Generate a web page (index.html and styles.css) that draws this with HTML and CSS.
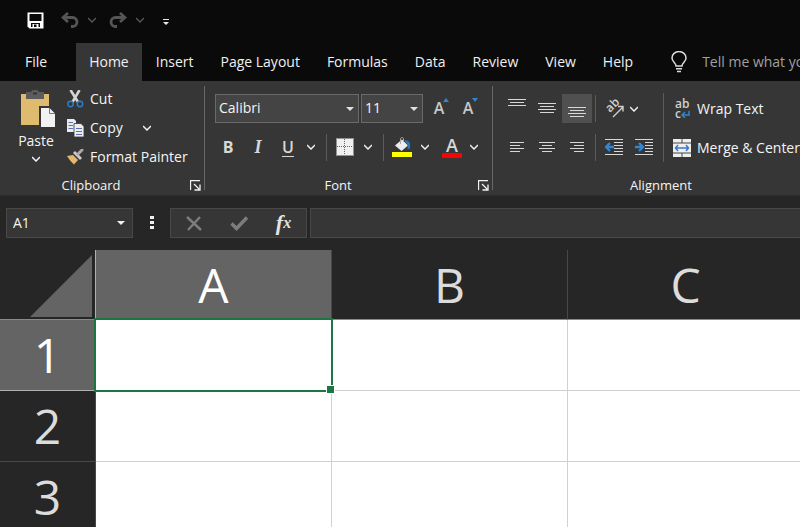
FILE: index.html
```
<!DOCTYPE html>
<html lang="en">
<head>
    <meta charset="UTF-8">
    <meta name="viewport" content="width=device-width, initial-scale=1.0">
    <title>Book1</title>
    <link rel="stylesheet" href="styles.css">
</head>
<body>

    <svg class="defs" aria-hidden="true">
        <symbol id="chevron" viewBox="0 0 8 6">
            <path d="M0 1l4 4 4-4" fill="none" stroke="currentColor" stroke-width="1.500"/>
        </symbol>
        <symbol id="launcher" viewBox="0 0 11 11">
            <path d="M.5 10V.5H10M4 4l5 5M10 4.500v5.500H4.500" fill="none" stroke="currentColor" stroke-width="1.300"/>
        </symbol>
    </svg>

    <header class="quick">
        <button class="q-save" aria-label="Save">
            <svg width="17" height="17" viewBox="0 0 17 17">
                <path d="M.5.5h16v16H2.500L.5 14.500z" fill="#fff"/>
                <path d="M2.500 2h12v7h-12zM4 11.500h9V15H4z" fill="#0a0a0a"/>
                <path d="M5.500 11.500h6V15H9.500v-2.500H7V15H5.500z" fill="#fff"/>
                <path d="M4 11h9v1H4z" fill="#0a0a0a"/>
            </svg>
        </button>
        <button class="q-undo" aria-label="Undo">
            <svg width="18" height="16" viewBox="0 0 18 16">
                <path d="M7 1L2 5.500 7 10M2 5.500h9.500a4.500 4.500 0 0 1 0 9H10" fill="none" stroke="currentColor" stroke-width="2.800"/>
            </svg>
        </button>
        <button class="q-drop" aria-label="Undo list"><svg width="8" height="6"><use href="#chevron"/></svg></button>
        <button class="q-undo q-redo" aria-label="Redo">
            <svg width="18" height="16" viewBox="0 0 18 16">
                <path d="M11 1l5 4.500L11 10M16 5.500H6.500a4.500 4.500 0 0 0 0 9H8" fill="none" stroke="currentColor" stroke-width="2.800"/>
            </svg>
        </button>
        <button class="q-drop" aria-label="Redo list"><svg width="8" height="6"><use href="#chevron"/></svg></button>
        <button class="q-more" aria-label="Customize">
            <svg width="6" height="7" viewBox="0 0 6 7"><path d="M0 0h6v1H0zM0 3h6L3 6z" fill="#e8e8e8"/></svg>
        </button>
    </header>

    <nav class="tabs">
        <a href="#" class="file">File</a>
        <a href="#" class="active">Home</a>
        <a href="#">Insert</a>
        <a href="#">Page Layout</a>
        <a href="#">Formulas</a>
        <a href="#">Data</a>
        <a href="#">Review</a>
        <a href="#">View</a>
        <a href="#">Help</a>
        <label class="tell" for="tell">
            <svg width="16" height="22" viewBox="0 0 16 22" fill="none" stroke="#dcdcdc" stroke-width="1.500">
                <path d="M5 15c0-3-4-4-4-8a7 6.500 0 0 1 14 0c0 4-4 5-4 8z"/>
                <path d="M5 17.800h6M6 20.500h4"/>
            </svg>
        </label>
        <input type="text" id="tell" placeholder="Tell me what you want to do">
    </nav>

    <main class="ribbon">
        <section class="group clipboard">
            <div class="tools">
                <button class="paste">
                    <svg width="35" height="38" viewBox="0 0 35 38">
                        <path d="M0 4h28v31H0z" fill="#dfbb70"/>
                        <path d="M5 2h5c1-3 7-3 8 0h5v7H5z" fill="#5c5c5c"/>
                        <path d="M12 2.500h4v2h-4z" fill="#363636"/>
                        <path d="M18 16h12l5 5v17H18z" fill="#363636"/>
                        <path d="M20 18h8.500l5.500 5.500V37H20z" fill="#f2f2f2"/>
                        <path d="M28.500 18v5.500H34" fill="none" stroke="#777"/>
                    </svg>
                    <span>Paste</span>
                    <svg width="8" height="6"><use href="#chevron"/></svg>
                </button>
                <div class="clip-list">
                    <button>
                        <svg width="17" height="18" viewBox="0 0 17 18">
                            <path d="M3.500 0l7.500 12M12.500 0L5.500 12" stroke="#d5d5d5" stroke-width="2.600"/>
                            <circle cx="3.500" cy="14" r="2.700" fill="none" stroke="#2e7fc9" stroke-width="1.400"/>
                            <circle cx="13" cy="14" r="2.700" fill="none" stroke="#2e7fc9" stroke-width="1.400"/>
                        </svg>
                        Cut
                    </button>
                    <button>
                        <svg width="17" height="18" viewBox="0 0 17 18">
                            <path d="M0 0h7l2 2v11H0z" fill="#ececec"/>
                            <path d="M1.500 3.500H6M1.500 6.500H6M1.500 9.500H6" stroke="#5673b8"/>
                            <path d="M7 4.500h7l3 3V18H7z" fill="#ececec" stroke="#363636" stroke-width=".8"/>
                            <path d="M9 9.500h6M9 12.500h6M9 15.500h6" stroke="#5673b8"/>
                        </svg>
                        Copy
                        <svg class="copy-drop" width="8" height="6"><use href="#chevron"/></svg>
                    </button>
                    <button>
                        <svg width="17" height="16" viewBox="0 0 17 16">
                            <path d="M0 7l6-1 5 5-4 4.500C4 13 2 10 0 7z" fill="#e3b76c"/>
                            <path d="M6 4l2-2 7 7-2 2z" fill="#cfc9cf"/>
                            <path d="M11 5l4-4" stroke="#a9a9a9" stroke-width="3" stroke-linecap="round"/>
                        </svg>
                        Format Painter
                    </button>
                </div>
            </div>
            <h2>Clipboard</h2>
            <button class="launch" aria-label="Clipboard settings"><svg width="11" height="11"><use href="#launcher"/></svg></button>
        </section>

        <section class="group font">
            <div class="tools">
                <div class="line">
                    <div class="pick family">
                        <select aria-label="Font"><option>Calibri</option></select>
                    </div>
                    <div class="pick size">
                        <select aria-label="Font size"><option>11</option></select>
                    </div>
                    <button class="grow" aria-label="Increase font size">A<svg width="6" height="4" viewBox="0 0 6 4"><path d="M3 0l3 4H0z" fill="#2e86d4"/></svg></button>
                    <button class="grow" aria-label="Decrease font size">A<svg width="6" height="4" viewBox="0 0 6 4"><path d="M0 0h6L3 4z" fill="#2e86d4"/></svg></button>
                </div>
                <div class="line marks">
                    <button class="bold">B</button>
                    <button class="italic">I</button>
                    <button class="under">U</button>
                    <button class="drop" aria-label="Underline style"><svg width="8" height="6"><use href="#chevron"/></svg></button>
                    <i class="rule"></i>
                    <button class="wide" aria-label="Borders">
                        <svg width="18" height="18" viewBox="0 0 18 18">
                            <path d="M1 1h16v16H1z" fill="#f0f0f0"/>
                            <path d="M.5.5h17v17H.5z" fill="none" stroke="#f0f0f0" stroke-dasharray="1 1"/>
                            <path d="M8.500 1v16M1 8.500h16" stroke="#666" stroke-dasharray="1 1"/>
                        </svg>
                    </button>
                    <button class="drop" aria-label="Border style"><svg width="8" height="6"><use href="#chevron"/></svg></button>
                    <i class="rule"></i>
                    <button class="wide" aria-label="Fill color">
                        <svg width="20" height="20" viewBox="0 0 20 20">
                            <path d="M3 8.500l7-6 6 6-6.500 5.500z" fill="#ededed"/>
                            <path d="M8.500 7V2c0-2 3-2 3 0v3" fill="none" stroke="#aaa"/>
                            <path d="M12 3.500c5-1 7 2 6 8l-2.500 1c.5-4 0-6-3.500-9z" fill="#2c73b5"/>
                            <path d="M0 15h20v5H0z" fill="#ff0"/>
                        </svg>
                    </button>
                    <button class="drop" aria-label="Fill color list"><svg width="8" height="6"><use href="#chevron"/></svg></button>
                    <button class="color" aria-label="Font color">A</button>
                    <button class="drop" aria-label="Font color list"><svg width="8" height="6"><use href="#chevron"/></svg></button>
                </div>
            </div>
            <h2>Font</h2>
            <button class="launch" aria-label="Font settings"><svg width="11" height="11"><use href="#launcher"/></svg></button>
        </section>

        <section class="group align">
            <div class="tools">
                <div class="align-grid">
                    <div class="line">
                        <button aria-label="Top align"><svg width="18" height="19"><path d="M0 .5h18M2 3.500h14M0 6.500h18" stroke="#d8d8d8"/></svg></button>
                        <button aria-label="Middle align"><svg width="18" height="19"><path d="M0 4.500h18M2 7.500h14M0 10.500h18M2 13.500h14" stroke="#d8d8d8"/></svg></button>
                        <button class="on" aria-label="Bottom align"><svg width="18" height="19"><path d="M0 8.500h18M2 11.500h14M0 14.500h18M2 17.500h14" stroke="#d8d8d8"/></svg></button>
                        <i class="rule"></i>
                        <button aria-label="Orientation">
                            <svg class="orient" width="19" height="19" viewBox="0 0 19 19">
                                <text transform="translate(5 14) rotate(-45)">ab</text>
                                <path d="M8 18L17.500 8.500M13 7.500h5v5" fill="none" stroke="#d0d0d0" stroke-width="1.400"/>
                            </svg>
                        </button>
                        <button class="drop" aria-label="Orientation list"><svg width="8" height="6"><use href="#chevron"/></svg></button>
                    </div>
                    <div class="line">
                        <button aria-label="Align left"><svg width="14" height="13"><path d="M0 1.500h14M0 4.500h10M0 7.500h14M0 10.500h10" stroke="#d8d8d8"/></svg></button>
                        <button aria-label="Center"><svg width="16" height="13"><path d="M0 1.500h16M3 4.500h10M0 7.500h16M3 10.500h10" stroke="#d8d8d8"/></svg></button>
                        <button aria-label="Align right"><svg width="14" height="13"><path d="M0 1.500h14M4 4.500h10M0 7.500h14M4 10.500h10" stroke="#d8d8d8"/></svg></button>
                        <i class="rule"></i>
                        <button aria-label="Decrease indent">
                            <svg width="18" height="17"><path d="M0 .5h18M9 3.500h9M9 6.500h9M9 9.500h9M9 12.500h9M0 15.500h18" stroke="#d8d8d8"/><path d="M9 8H1M5 4L1 8l4 4" fill="none" stroke="#2e86d4" stroke-width="2.400"/></svg>
                        </button>
                        <button aria-label="Increase indent">
                            <svg width="18" height="17"><path d="M0 .5h18M10 3.500h8M10 6.500h8M10 9.500h8M10 12.500h8M0 15.500h18" stroke="#d8d8d8"/><path d="M0 8h8M4 4l4 4-4 4" fill="none" stroke="#2e86d4" stroke-width="2.400"/></svg>
                        </button>
                    </div>
                </div>
                <div class="wrap-list">
                    <button>
                        <span class="wrap-icon">ab<br>c<svg width="9" height="7" viewBox="0 0 9 7"><path d="M8 0v4H1M4 1L1 4l3 3" fill="none" stroke="#2e86d4" stroke-width="1.500"/></svg></span>
                        Wrap Text
                    </button>
                    <button>
                        <svg width="18" height="18" viewBox="0 0 18 18">
                            <path d="M0 0h18v18H0z" fill="#efefef"/>
                            <path d="M9 0v4M9 14v4M0 4h18M0 14h18" stroke="#444"/>
                            <path d="M2.500 9h13M5 6L2.500 9 5 12M13 6l2.500 3-2.500 3" fill="none" stroke="#3b78c4" stroke-width="1.500"/>
                        </svg>
                        Merge &amp; Center
                    </button>
                </div>
            </div>
            <h2>Alignment</h2>
        </section>
    </main>

    <div class="formula">
        <div class="pick name-box">
            <input type="text" value="A1" aria-label="Name box">
        </div>
        <svg class="dots" width="4" height="14"><path d="M0 0h4v3H0zM0 5h4v3H0zM0 10h4v3H0z" fill="#f0f0f0"/></svg>
        <div class="entry">
            <button aria-label="Cancel"><svg width="16" height="15"><path d="M1 1l14 13M14 1L2 14" stroke="#7d7d7d" stroke-width="2.400"/></svg></button>
            <button aria-label="Enter"><svg width="18" height="15"><path d="M1.500 7.500l5 5L17 1.500" fill="none" stroke="#7d7d7d" stroke-width="3.400"/></svg></button>
            <button class="fx" aria-label="Insert function">f<sub>x</sub></button>
        </div>
        <input type="text" class="formula-input" aria-label="Formula">
    </div>

    <table class="sheet">
        <thead>
            <tr>
                <th class="corner"><svg width="62" height="62"><path d="M62 0v62H0z" fill="#646464"/></svg></th>
                <th class="sel">A</th>
                <th>B</th>
                <th>C</th>
            </tr>
        </thead>
        <tbody>
            <tr><th class="sel">1</th><td class="cursor"></td><td></td><td></td></tr>
            <tr><th>2</th><td></td><td></td><td></td></tr>
            <tr><th>3</th><td></td><td></td><td></td></tr>
        </tbody>
    </table>

</body>
</html>
```
FILE: styles.css
```
*{
    margin: 0;
    padding: 0;
    box-sizing: border-box;
}
body{
    height: 100vh;
    overflow: hidden;
    background-color: #262626;
    color: #f4f4f4;
    font-family: "Open Sans", "Noto Sans", sans-serif;
    font-size: 14px;
    line-height: 20px;
}
button, input, select{
    font: inherit;
    color: inherit;
    background: none;
    border: none;
    outline: none;
}
button{
    display: flex;
    align-items: center;
    justify-content: center;
    flex: none;
    white-space: nowrap;
}
svg{
    display: block;
    flex: none;
}
.defs{
    width: 0;
    height: 0;
    position: absolute;
}

/* title bar */
.quick{
    display: flex;
    align-items: center;
    height: 43px;
    padding: 0 26px 3px;
    background-color: #0a0a0a;
    color: #555;
}
.quick button{
    height: 40px;
}
.q-save{
    width: 18px;
}
.q-undo{
    width: 18px;
    margin-left: 17px;
}
.q-drop{
    width: 8px;
    margin-left: 9px;
}
.q-redo{
    margin-left: 13px;
}
.q-more{
    width: 6px;
    margin-left: 19px;
    padding-top: 4px;
}

/* tabs */
.tabs{
    display: flex;
    gap: 1px;
    height: 38px;
    background-color: #0a0a0a;
    overflow: hidden;
}
.tabs a{
    flex: none;
    padding: 0 13px;
    line-height: 38px;
    color: #f0f0f0;
    text-decoration: none;
    white-space: nowrap;
}
.tabs .file{
    padding: 0 28px 0 25px;
}
.tabs .active{
    background-color: #363636;
}
.tell{
    flex: none;
    padding: 8px 14px 0 24px;
}
.tabs input{
    flex: none;
    width: 220px;
}
.tabs input::placeholder{
    color: #a0a0a0;
}

/* ribbon */
.ribbon{
    display: flex;
    height: 115px;
    background-color: #363636;
    border-bottom: 1px solid #2e2e2e;
    overflow: hidden;
}
.group{
    position: relative;
    flex: none;
    padding-top: 4px;
}
.group::after{
    content: "";
    position: absolute;
    top: 5px;
    right: 0;
    width: 1px;
    height: 104px;
    background-color: #686868;
}
.group .tools{
    display: flex;
    height: 90px;
}
.group h2{
    font-size: 13px;
    font-weight: 400;
    line-height: 20px;
    text-align: center;
}
.launch{
    position: absolute;
    right: 4px;
    bottom: 4px;
}
.clipboard{
    width: 205px;
}
.clipboard h2{
    padding-right: 23px;
}
.paste{
    flex-direction: column;
    justify-content: flex-start;
    width: 44px;
    margin-left: 14px;
    padding-top: 5px;
}
.paste > svg:first-child{
    margin-left: 5px;
}
.paste span{
    margin: 3px 0 5px;
}
.clip-list{
    margin-top: -1px;
}
.clip-list button{
    height: 29px;
    margin-left: 9px;
    gap: 6px;
}
.copy-drop{
    margin-left: 14px;
}
.font{
    width: 288px;
    padding-left: 10px;
}
.font .tools{
    flex-direction: column;
}
.font h2{
    padding-right: 32px;
}
.line{
    display: flex;
    align-items: center;
    height: 39px;
}
.font .line:first-child{
    height: 46px;
}
.font .marks{
    height: 32px;
}
.pick{
    position: relative;
    height: 29px;
    background-color: #444;
    border: 1px solid #6a6a6a;
}
.pick::after{
    content: "";
    position: absolute;
    top: 12px;
    right: 4px;
    border: 4px solid transparent;
    border-top-color: #e0e0e0;
    border-bottom: none;
}
.pick select, .pick input{
    appearance: none;
    width: 100%;
    height: 27px;
    padding-left: 3px;
}
.family{
    width: 144px;
    margin-right: 2px;
}
.size{
    width: 62px;
    margin-right: 8px;
}
.grow{
    position: relative;
    width: 16px;
    height: 26px;
    margin-right: 13px;
    font-size: 16px;
    font-weight: 600;
    color: #c8c8c8;
}
.grow svg{
    position: absolute;
    top: 3px;
    right: -2px;
}
.marks button{
    width: 26px;
    height: 28px;
    font-size: 16px;
    font-weight: 700;
    color: #d8d8d8;
}
.marks .italic{
    width: 34px;
    font-family: "Liberation Serif", serif;
    font-style: italic;
    font-size: 18px;
}
.marks .under{
    text-decoration: underline;
    text-decoration-thickness: 1px;
    text-underline-offset: 3px;
    font-weight: 600;
}
.line .drop{
    width: 10px;
    margin-left: 5px;
    color: #f0f0f0;
}
.marks .color{
    width: 20px;
    height: 22px;
    margin: 0 2px 0 12px;
    border-bottom: 5px solid #f00;
    font-size: 18px;
    font-weight: 600;
}
.rule{
    width: 1px;
    height: 27px;
    background-color: #5c5c5c;
}
.marks .rule{
    margin: 0 5px 0 10px;
}
.align{
    width: 336px;
    padding-left: 9px;
}
.align h2{
    padding-right: 9px;
}
.align-grid{
    width: 162px;
    height: 69px;
    margin-top: 8px;
    border-right: 1px solid #5c5c5c;
}
.align-grid .line:first-child{
    margin-top: -4px;
}
.align-grid button{
    width: 30px;
    height: 29px;
}
.align-grid .on{
    background-color: #505050;
}
.align-grid .rule{
    margin: 0 3px;
}
.align-grid .drop{
    margin-left: 0;
}
.orient text{
    font-size: 12px;
    font-weight: 600;
    fill: #d0d0d0;
}
.wrap-list{
    padding-top: 4px;
}
.wrap-list button{
    height: 39px;
    margin-left: 9px;
    gap: 6px;
}
.wrap-icon{
    width: 18px;
    padding-left: 2px;
    font-size: 12px;
    font-weight: 600;
    line-height: 10px;
    text-align: left;
    color: #d0d0d0;
}
.wrap-icon svg{
    display: inline-block;
}

/* formula bar */
.formula{
    display: flex;
    align-items: center;
    height: 54px;
    padding-left: 6px;
}
.name-box{
    flex: none;
    width: 127px;
    height: 30px;
    background-color: #363636;
    border-color: #484848;
}
.name-box::after{
    right: 7px;
    border-top-color: #f0f0f0;
}
.pick.name-box input{
    padding-left: 6px;
}
.dots{
    margin: 0 16px 0 17px;
}
.entry{
    display: flex;
    flex: none;
    width: 137px;
    height: 30px;
    margin-right: 3px;
    background-color: #363636;
    border: 1px solid #484848;
}
.entry button{
    flex: 1;
}
.entry .fx{
    font-family: "Liberation Serif", serif;
    font-style: italic;
    font-weight: 700;
    font-size: 22px;
    color: #e4e4e4;
}
.fx sub{
    font-size: 16px;
}
.formula-input{
    flex: 1;
    height: 30px;
    padding: 0 8px;
    background-color: #363636;
    border: 1px solid #484848;
    border-right: none;
}

/* sheet */
.sheet{
    width: 804px;
    table-layout: fixed;
    border-collapse: separate;
    border-spacing: 0;
    font-size: 48px;
    line-height: 60px;
}
.sheet th{
    height: 71px;
    background-color: #262626;
    border-right: 1px solid #484848;
    border-bottom: 1px solid #484848;
    font-weight: 400;
    color: #dcdcdc;
}
.sheet thead th{
    height: 70px;
    border-bottom-color: #8a8a8a;
}
.sheet .corner{
    width: 96px;
    border-right-color: #b0b0b0;
}
.corner svg{
    margin: 2px 3px 0 auto;
}
.sheet .sel{
    background-color: #646464;
    border-bottom-color: #b0b0b0;
    color: #fff;
}
.sheet td{
    background-color: #fff;
    border-right: 1px solid #d0d0d0;
    border-bottom: 1px solid #d0d0d0;
}
.sheet .cursor{
    position: relative;
}
.cursor::before{
    content: "";
    position: absolute;
    inset: -2px -2px -2px -2px;
    border: 2px solid #1a7741;
}
.cursor::after{
    content: "";
    position: absolute;
    right: -4px;
    bottom: -4px;
    width: 7px;
    height: 7px;
    background-color: #1a7741;
    border: 1px solid #fff;
}
```
